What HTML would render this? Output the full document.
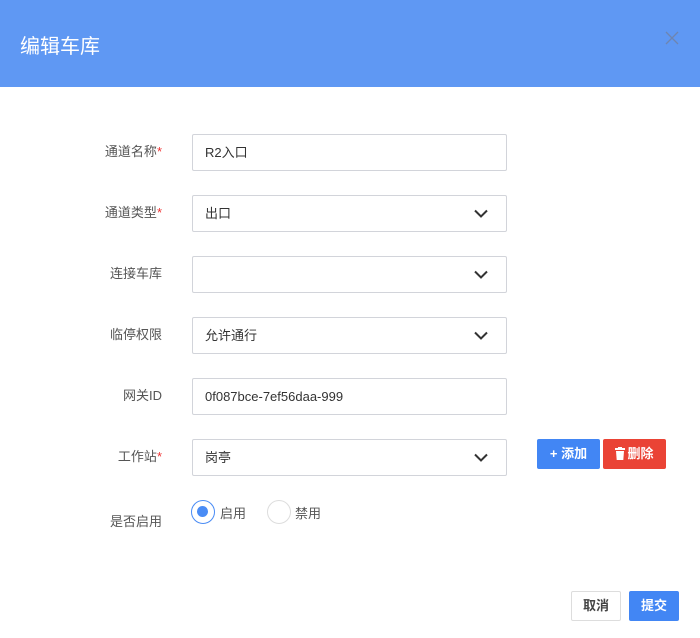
<!DOCTYPE html>
<html><head><meta charset="utf-8"><style>
*{box-sizing:border-box;margin:0;padding:0}
body{width:700px;height:638px;background:#fff;font-family:"Liberation Sans","Noto Sans CJK SC",sans-serif;position:relative;overflow:hidden;color:#555}
.hd{position:absolute;left:0;top:0;width:700px;height:87px;background:#5f98f3}
.hd .t{position:absolute;left:20px;top:30px;font-size:20px;color:#fff}
.hd .x{position:absolute;left:664px;top:30px}
.lb{position:absolute;right:538px;font-size:13px;color:#555;text-align:right;white-space:nowrap}
.lb i{color:#e33;font-style:normal}
.in{position:absolute;left:192px;width:315px;height:37px;border:1px solid #d2d4da;border-radius:2px;font-size:13px;color:#333;padding:10px 12px;line-height:16px}
.in svg{position:absolute;right:18px;top:13px}
.btn{position:absolute;height:30px;border-radius:2px;font-size:13px;font-weight:bold;color:#fff;text-align:center;line-height:30px}
.rd{position:absolute;top:500px;width:24px;height:24px;border-radius:50%;border:1px solid #ddd}
.rt{position:absolute;top:503px;font-size:13px;color:#555}
</style></head><body>
<div class="hd"><div class="t">编辑车库</div><svg class="x" width="16" height="16"><path d="M2 2L14 14M14 2L2 14" stroke="#6e85b0" stroke-width="1.3"/></svg></div>

<div class="lb" style="top:141px">通道名称<i>*</i></div>
<div class="in" style="top:134px">R2入口</div>
<div class="lb" style="top:202px">通道类型<i>*</i></div>
<div class="in" style="top:195px">出口<svg width="14" height="9"><path d="M1 1.5L7 7.5L13 1.5" stroke="#333" stroke-width="2" fill="none"/></svg></div>
<div class="lb" style="top:263px">连接车库</div>
<div class="in" style="top:256px"><svg width="14" height="9"><path d="M1 1.5L7 7.5L13 1.5" stroke="#333" stroke-width="2" fill="none"/></svg></div>
<div class="lb" style="top:324px">临停权限</div>
<div class="in" style="top:317px">允许通行<svg width="14" height="9"><path d="M1 1.5L7 7.5L13 1.5" stroke="#333" stroke-width="2" fill="none"/></svg></div>
<div class="lb" style="top:385px">网关ID</div>
<div class="in" style="top:378px">0f087bce-7ef56daa-999</div>
<div class="lb" style="top:446px">工作站<i>*</i></div>
<div class="in" style="top:439px">岗亭<svg width="14" height="9"><path d="M1 1.5L7 7.5L13 1.5" stroke="#333" stroke-width="2" fill="none"/></svg></div>
<div class="btn" style="left:537px;top:439px;width:63px;background:#4286f4">+ 添加</div>
<div class="btn" style="left:603px;top:439px;width:63px;background:#ea4335"><svg width="10" height="13" style="vertical-align:-2px;margin-right:2px"><rect x="0" y="1" width="10" height="2" fill="#fff"/><rect x="3" y="0" width="4" height="2" fill="#fff"/><path d="M1 4H9L8.3 13H1.7Z" fill="#fff"/></svg>删除</div>

<div class="lb" style="top:511px">是否启用</div>
<div class="rd" style="left:191px;border:1.5px solid #4a8cf5"><div style="position:absolute;left:5px;top:5px;width:11px;height:11px;border-radius:50%;background:#4a8cf5"></div></div>
<div class="rt" style="left:220px">启用</div>
<div class="rd" style="left:267px"></div>
<div class="rt" style="left:295px">禁用</div>

<div class="btn" style="left:571px;top:591px;width:50px;background:#fff;border:1px solid #ddd;color:#444;line-height:28px">取消</div>
<div class="btn" style="left:629px;top:591px;width:50px;background:#4286f4">提交</div>
</body></html>
